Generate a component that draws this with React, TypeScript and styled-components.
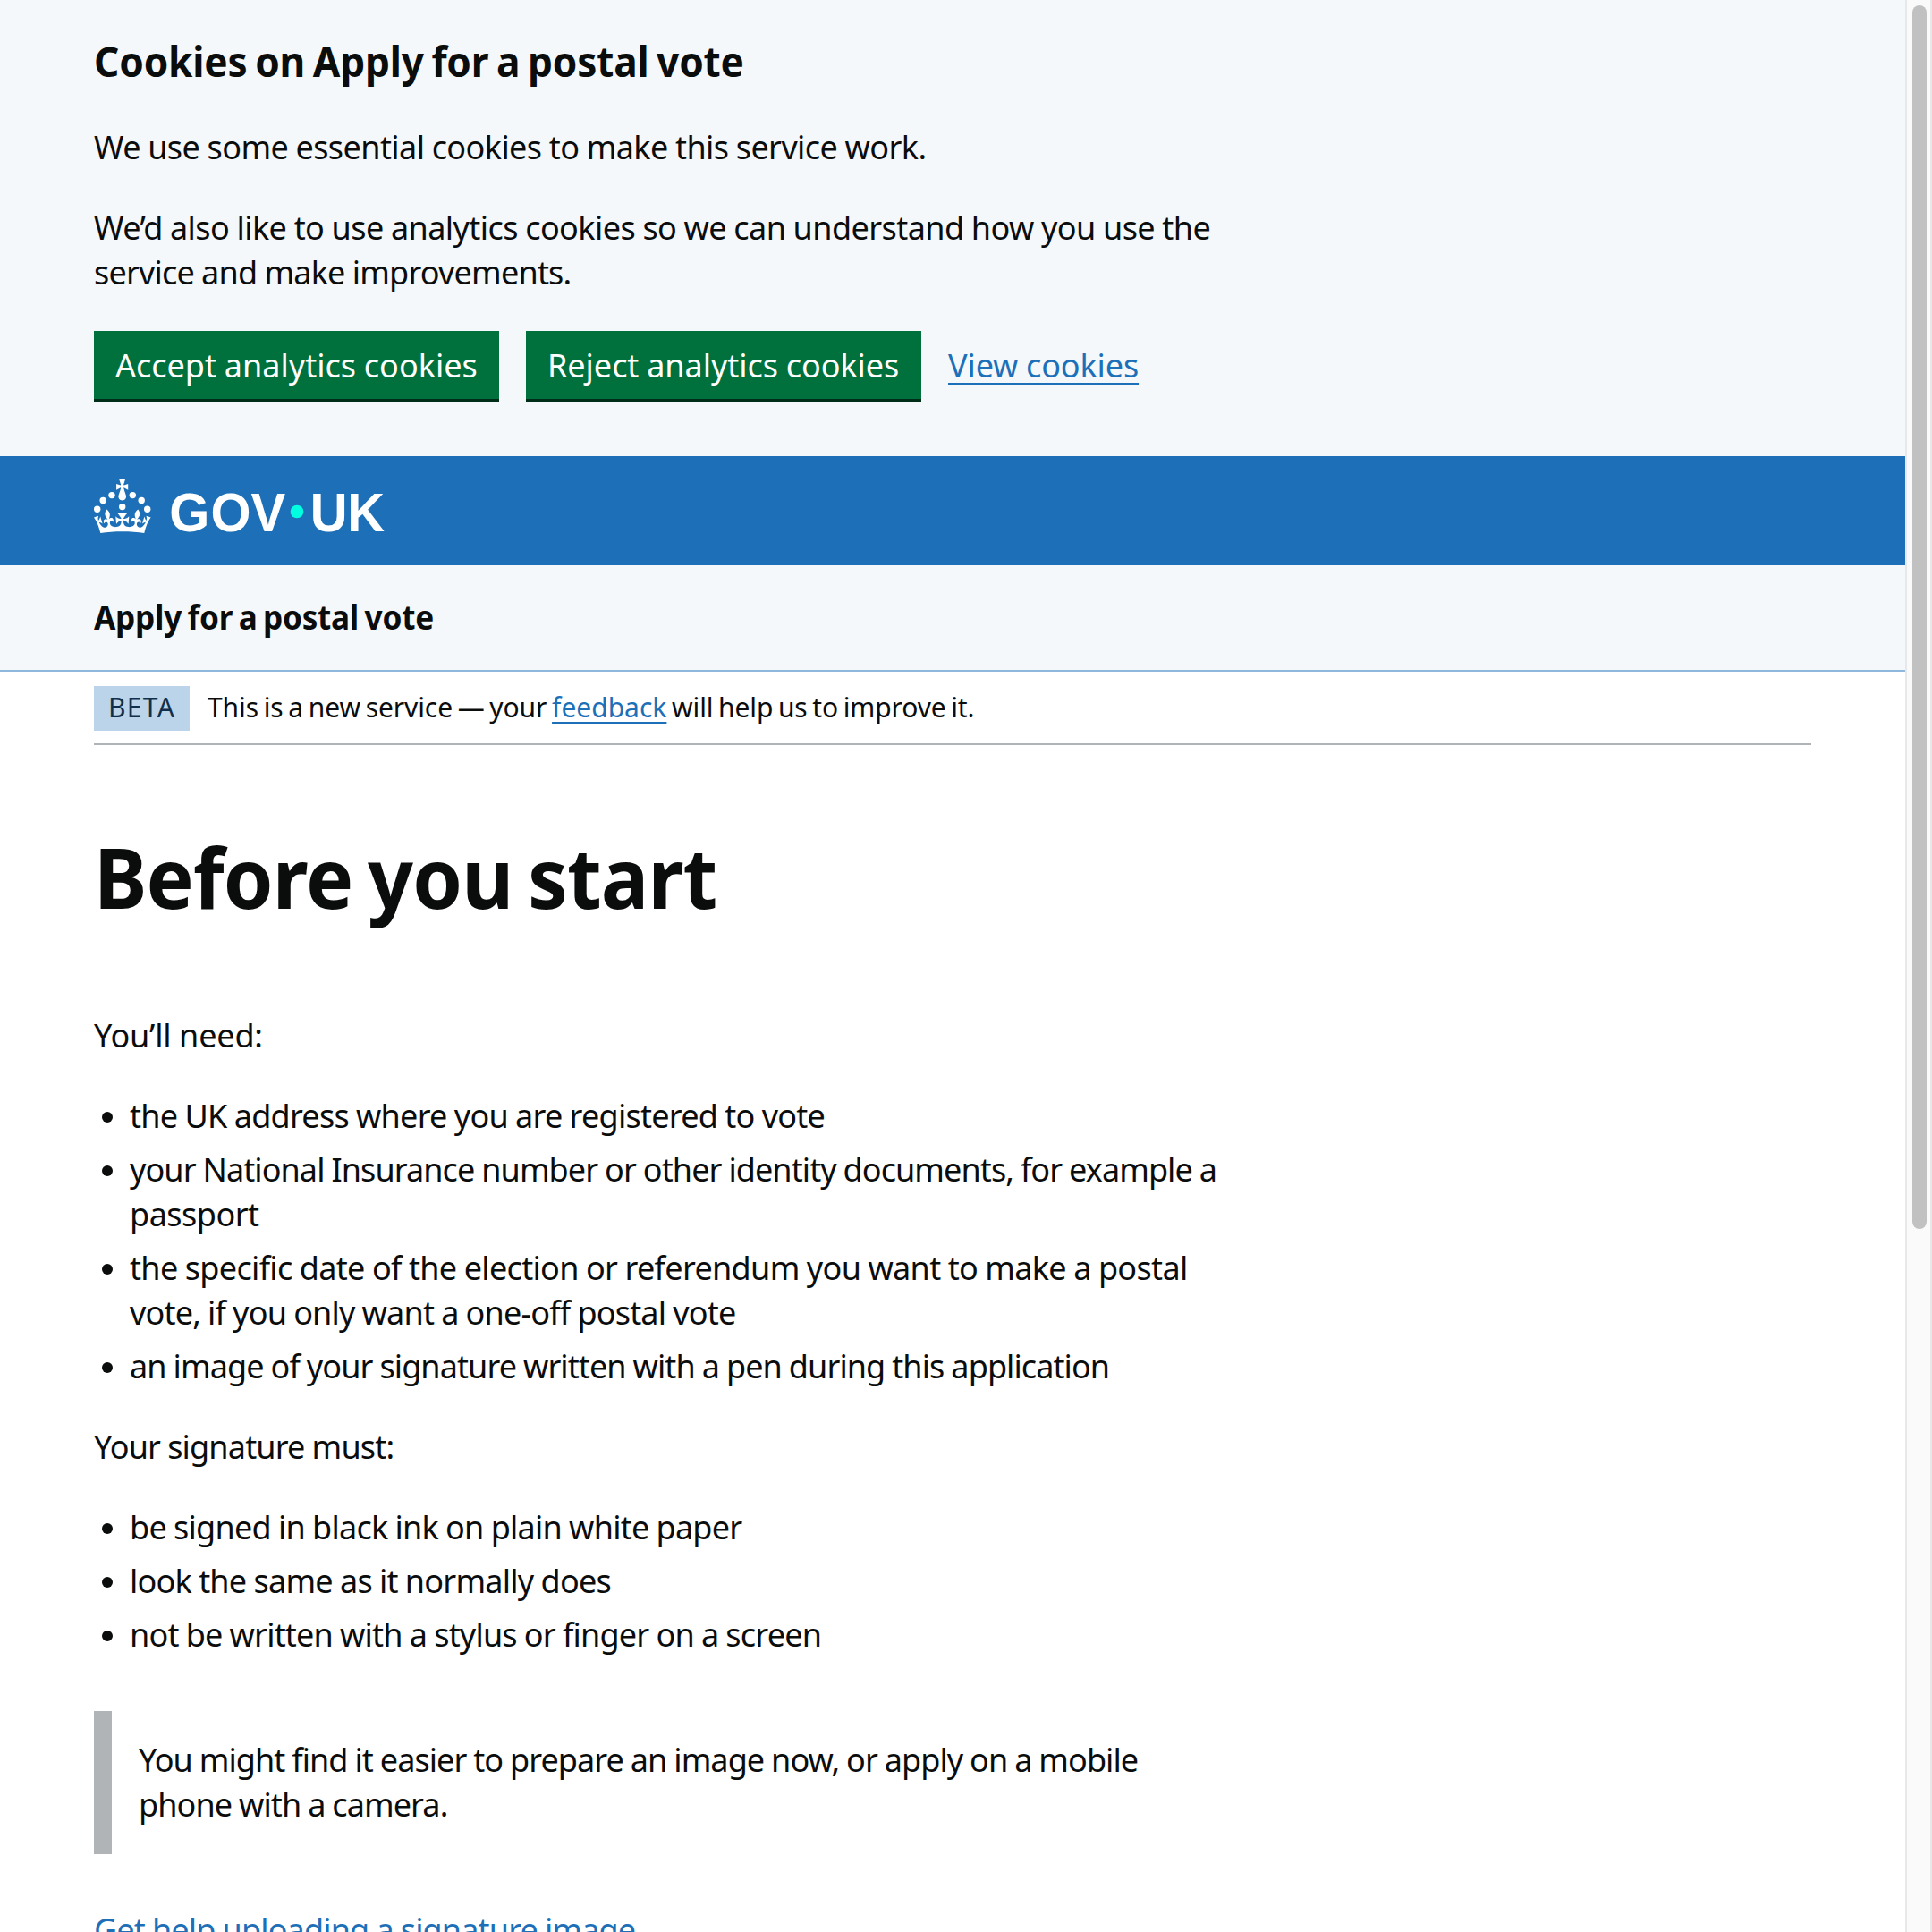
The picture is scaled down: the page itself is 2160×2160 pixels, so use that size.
import React from "react";
import styled, { createGlobalStyle } from "styled-components";

const ink = "#0b0c0c";
const blue = "#1d70b8";
const paleBlue = "#f4f8fb";
const grey = "#b1b4b6";

const GlobalStyle = createGlobalStyle`
  *, *::before, *::after { box-sizing: border-box; }
  body {
    margin: 0;
    background: #fff;
    color: ${ink};
    font-family: "Noto Sans", "Open Sans", sans-serif;
    font-size: 36px;
    line-height: 50px;
  }
`;

const Window = styled.div`
  display: flex;
  width: 2160px;
  height: 2160px;
  overflow: hidden;
`;

const Page = styled.div`
  flex: 1;
  min-width: 0;
`;

const ScrollTrack = styled.div`
  width: 30px;
  padding: 6px 4px 0 6px;
  border: solid #e8e8e8;
  border-width: 0 2px;
  background: #fafafa;
`;

const ScrollThumb = styled.div`
  width: 16px;
  height: 1368px;
  border-radius: 8px;
  background: #c1c1c1;
`;

const Container = styled.div`
  margin: 0 105px;
`;

/* One set line of copy; $track is its letter spacing in px. */
const Line = styled.span<{ $track?: number; $inline?: boolean }>`
  display: ${(p) => (p.$inline ? "inline" : "block")};
  white-space: pre;
  letter-spacing: ${(p) => p.$track ?? 0}px;
  word-spacing: -0.5px;
`;

/* Bold copy is set slightly narrow. */
const NarrowLine = styled(Line)<{ $words?: number }>`
  width: max-content;
  word-spacing: ${(p) => p.$words ?? -2.5}px;
  transform: scaleX(0.95);
  transform-origin: 0 50%;
`;

const Paragraph = styled.p`
  margin: 0 0 40px;
`;

const Link = styled.a<{ $offset?: number }>`
  color: ${blue};
  text-decoration: underline;
  text-decoration-thickness: 2px;
  text-underline-offset: ${(p) => p.$offset ?? 6}px;
  text-decoration-skip-ink: none;
`;

const CookieBanner = styled.section`
  height: 510px;
  padding-top: 38px;
  background: ${paleBlue};
`;

const BannerHeading = styled.h2`
  margin: 0 0 42px;
  font-size: 46.5px;
  line-height: 60px;
`;

const ButtonRow = styled.div`
  display: flex;
  align-items: center;
  gap: 30px;

  ${Link} {
    margin-top: 2px;
  }
`;

const Button = styled.button<{ $width: number }>`
  width: ${(p) => p.$width}px;
  height: 76px;
  padding: 2px 0 0 24px;
  border: 0;
  background: #00703c;
  box-shadow: 0 4px 0 #002d18;
  color: #fff;
  font: inherit;
  text-align: left;
`;

const Header = styled.header`
  height: 122px;
  padding-top: 26px;
  background: ${blue};
`;

const Logo = styled.svg`
  display: block;
  width: 324px;
  height: 60px;
  overflow: visible;
  fill: #fff;
`;

const LogoText = styled.text`
  font-family: "Liberation Sans", Arial, sans-serif;
  font-size: 61px;
  font-weight: 700;
`;

const ServiceNav = styled.nav`
  height: 119px;
  padding-top: 33px;
  border-bottom: 2px solid #8eb8dc;
  background: ${paleBlue};
  font-size: 37px;
  font-weight: 700;
`;

const PhaseBanner = styled.div`
  display: flex;
  gap: 20px;
  padding: 16px 0 14px;
  border-bottom: 2px solid ${grey};
  font-size: 30px;
  line-height: 47px;
`;

const Tag = styled.strong`
  width: 107px;
  height: 50px;
  padding-left: 16px;
  background: #bbd4ea;
  color: #0f2f4c;
  font-weight: 400;
  letter-spacing: 1.3px;
`;

const PhaseText = styled.span`
  white-space: pre;
  ${Line} {
    word-spacing: -2px;
  }
`;

const Title = styled.h1`
  margin: 97px 0 103px;
  font-size: 94px;
  line-height: 100px;
`;

const Bullets = styled.ul`
  display: flex;
  flex-direction: column;
  gap: 10px;
  margin: 0 0 40px;
  padding: 0;
  list-style: none;
`;

const Bullet = styled.li`
  display: flex;
  gap: 19px;
  padding-left: 9px;
  &::before {
    content: "";
    width: 12px;
    height: 12px;
    margin-top: 20px;
    border-radius: 50%;
    background: ${ink};
  }
`;

const Inset = styled.div`
  height: 160px;
  margin: 60px 0;
  padding: 30px 0 0 30px;
  border-left: 20px solid ${grey};
`;

type Copy = [text: string, track: number];

const needs: Copy[][] = [
  [["the UK address where you are registered to vote", -0.74]],
  [
    ["your National Insurance number or other identity documents, for example a", -0.92],
    ["passport", -0.5],
  ],
  [
    ["the specific date of the election or referendum you want to make a postal", -0.67],
    ["vote, if you only want a one-off postal vote", -0.81],
  ],
  [["an image of your signature written with a pen during this application", -0.91]],
];

const rules: Copy[][] = [
  [["be signed in black ink on plain white paper", -0.76]],
  [["look the same as it normally does", -0.76]],
  [["not be written with a stylus or finger on a screen", -0.8]],
];

const Lines = ({ copy }: { copy: Copy[] }) => (
  <>
    {copy.map(([text, track]) => (
      <Line key={text} $track={track}>
        {text}
      </Line>
    ))}
  </>
);

const BulletList = ({ items }: { items: Copy[][] }) => (
  <Bullets>
    {items.map((copy) => (
      <Bullet key={copy[0][0]}>
        <div>
          <Lines copy={copy} />
        </div>
      </Bullet>
    ))}
  </Bullets>
);

const GovUkLogo = () => (
  <Logo viewBox="0 0 324 60" role="img" aria-label="GOV.UK">
    <circle cx="20" cy="17.6" r="3.7" />
    <circle cx="10.2" cy="23.5" r="3.7" />
    <circle cx="3.7" cy="33.2" r="3.7" />
    <circle cx="31.7" cy="30.6" r="3.7" />
    <circle cx="43.3" cy="17.6" r="3.7" />
    <circle cx="53.2" cy="23.5" r="3.7" />
    <circle cx="59.7" cy="33.2" r="3.7" />
    <path d="M33.1,9.8c.2-.1.3-.3.5-.5l4.6,2.4v-6.8l-4.6,1.5c-.1-.2-.3-.3-.5-.5l1.9-5.9h-6.7l1.9,5.9c-.2.1-.3.3-.5.5l-4.6-1.5v6.8l4.6-2.4c.1.2.3.3.5.5l-2.6,8c-.9,2.8,1.2,5.7,4.1,5.7h0c3,0,5.1-2.9,4.1-5.7l-2.6-8ZM37,37.9s-3.4,3.8-4.1,6.1c2.2,0,4.2-.5,6.4-2.8l-.7,8.5c-2-2.8-4.4-4.1-5.7-3.8.1,3.1.5,6.7,5.8,7.2,3.7.3,6.7-1.5,7-3.8.4-2.6-2-4.3-3.7-1.6-1.4-4.5,2.4-6.1,4.9-3.2-1.9-4.5-1.8-7.7,2.4-10.9,3,4,2.6,7.3-1.2,11.1,2.4-1.3,6.2,0,4,4.6-1.2-2.8-3.7-2.2-4.2.2-.3,1.7.7,3.7,3,4.2,1.9.3,4.7-.9,7-5.9-1.3,0-2.4.7-3.9,1.7l2.4-8c.6,2.3,1.4,3.7,2.2,4.5.6-1.6.5-2.8,0-5.3l5,1.8c-2.6,3.6-5.2,8.7-7.3,17.5-7.4-1.1-15.7-1.7-24.5-1.7h0c-8.8,0-17.1.6-24.5,1.7-2.1-8.9-4.7-13.9-7.3-17.5l5-1.8c-.5,2.5-.6,3.7,0,5.3.8-.8,1.6-2.3,2.2-4.5l2.4,8c-1.5-1-2.6-1.7-3.9-1.7,2.3,5,5.2,6.2,7,5.9,2.3-.4,3.3-2.4,3-4.2-.5-2.4-3-3.1-4.2-.2-2.2-4.6,1.6-6,4-4.6-3.7-3.7-4.2-7.1-1.2-11.1,4.2,3.2,4.3,6.4,2.4,10.9,2.5-2.8,6.3-1.3,4.9,3.2-1.8-2.7-4.1-1-3.7,1.6.3,2.3,3.3,4.1,7,3.8,5.4-.5,5.7-4.2,5.8-7.2-1.3-.2-3.7,1-5.7,3.8l-.7-8.5c2.2,2.3,4.2,2.7,6.4,2.8-.7-2.3-4.1-6.1-4.1-6.1h10.6,0Z" />
    <g transform="scale(0.95 1)">
      <LogoText x="88.7 137.4 184.8" y="57.7">GOV</LogoText>
      <LogoText x="254.6 298.1" y="57.7">UK</LogoText>
    </g>
    <circle cx="227" cy="36" r="7.3" fill="#00ffe0" />
  </Logo>
);

export default function App() {
  return (
    <Window>
      <GlobalStyle />
      <Page>
        <CookieBanner>
          <Container>
            <BannerHeading>
              <NarrowLine $track={-0.18} $words={-2.8}>Cookies on Apply for a postal vote</NarrowLine>
            </BannerHeading>
            <Paragraph>
              <Line $track={-0.58}>We use some essential cookies to make this service work.</Line>
            </Paragraph>
            <Paragraph as="div">
              <Line $track={-0.57}>We’d also like to use analytics cookies so we can understand how you use the</Line>
              <Line $track={-0.79}>service and make improvements.</Line>
            </Paragraph>
            <ButtonRow>
              <Button $width={453}>
                <Line $track={0}>Accept analytics cookies</Line>
              </Button>
              <Button $width={442}>
                <Line $track={-0.04}>Reject analytics cookies</Line>
              </Button>
              <Link>
                <Line $track={-0.12} $inline>View cookies</Line>
              </Link>
            </ButtonRow>
          </Container>
        </CookieBanner>
        <Header>
          <Container>
            <GovUkLogo />
          </Container>
        </Header>
        <ServiceNav>
          <Container>
            <NarrowLine $track={-0.26}>Apply for a postal vote</NarrowLine>
          </Container>
        </ServiceNav>
        <Container>
          <PhaseBanner>
            <Tag>BETA</Tag>
            <PhaseText>
              <Line $track={-0.09} $inline>{"This is a new service — your "}</Line>
              <Link $offset={5}>feedback</Link>
              <Line $track={-0.12} $inline>{" will help us to improve it."}</Line>
            </PhaseText>
          </PhaseBanner>
          <Title>
            <NarrowLine $track={-0.9} $words={-6}>Before you start</NarrowLine>
          </Title>
          <Paragraph>
            <Line $track={-0.18}>You’ll need:</Line>
          </Paragraph>
          <BulletList items={needs} />
          <Paragraph>
            <Line $track={-0.83}>Your signature must:</Line>
          </Paragraph>
          <BulletList items={rules} />
          <Inset>
            <Lines
              copy={[
                ["You might find it easier to prepare an image now, or apply on a mobile", -0.94],
                ["phone with a camera.", -0.92],
              ]}
            />
          </Inset>
          <Link>
            <Line $track={-0.85} $inline>Get help uploading a signature image</Line>
          </Link>
        </Container>
      </Page>
      <ScrollTrack>
        <ScrollThumb />
      </ScrollTrack>
    </Window>
  );
}
